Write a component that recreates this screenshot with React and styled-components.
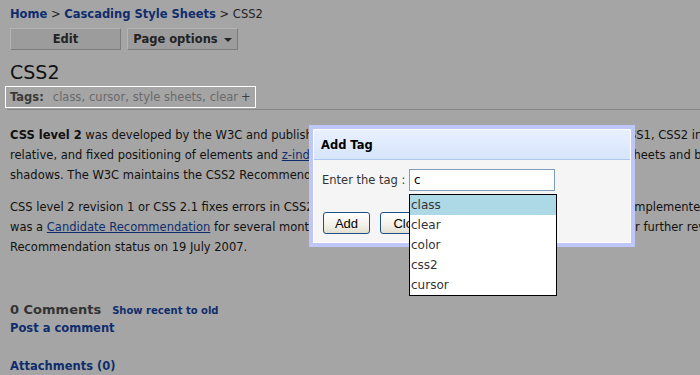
import styled, { createGlobalStyle } from "styled-components";

const GlobalStyle = createGlobalStyle`
  html, body {
    margin: 0;
    padding: 0;
    background: #a5a5a5;
    overflow: hidden;
  }
  body {
    width: 700px;
    height: 375px;
    font-family: "DejaVu Sans", Verdana, sans-serif;
  }
`;

const Page = styled.div`
  position: relative;
  width: 700px;
  height: 375px;
  padding: 6px 0 0 10px;
  box-sizing: border-box;
  color: #111;
  overflow: hidden;
`;

const Crumbs = styled.div`
  font-size: 11.5px;
  line-height: 16px;
  color: #222;
  white-space: nowrap;
`;

const NavLink = styled.a`
  color: #0f2d6c;
  font-weight: bold;
  text-decoration: none;
`;

const Toolbar = styled.div`
  display: flex;
  gap: 6px;
  margin-top: 6px;
`;

const ToolButton = styled.div`
  width: 111px;
  height: 22px;
  box-sizing: border-box;
  display: flex;
  align-items: center;
  justify-content: center;
  gap: 6px;
  background: #9c9c9c;
  border: 1px solid #7c7c7c;
  border-top-color: #b4b4b4;
  border-left-color: #b4b4b4;
  font-size: 11.5px;
  font-weight: bold;
  color: #222;
`;

const Caret = styled.span`
  width: 0;
  height: 0;
  border-left: 4px solid transparent;
  border-right: 4px solid transparent;
  border-top: 4px solid #222;
  margin-top: 2px;
`;

const Title = styled.h1`
  margin: 10px 0 0;
  font-size: 19px;
  line-height: 24px;
  font-weight: normal;
  color: #111;
`;

const TagBox = styled.div`
  display: inline-flex;
  align-items: center;
  height: 22px;
  box-sizing: border-box;
  margin: 2px 0 0 -5px;
  padding: 0 4px;
  border: 1px solid #fff;
  font-size: 11.5px;
  white-space: nowrap;
`;

const TagLabel = styled.span`
  font-weight: bold;
  color: #3a3a3a;
  margin-right: 9px;
`;

const Tag = styled.span`
  color: #6a6a6a;
`;

const Comma = styled.span`
  color: #4b6b80;
  margin-right: 4px;
`;

const Plus = styled.span`
  color: #3f3f3f;
  margin-left: 3px;
`;

const Rule = styled.div`
  height: 1px;
  background: #878787;
  margin: 1px 0 0 -3px;
`;

const Article = styled.div`
  margin-top: 15px;
  font-size: 11.5px;
  line-height: 20px;
  white-space: nowrap;
`;

const Para = styled.p`
  margin: 0 0 12px;
`;

const TextLink = styled.a`
  color: #0f2d6c;
  text-decoration: underline;
`;

const CommentsRow = styled.div`
  display: flex;
  align-items: baseline;
  gap: 11px;
  margin-top: 44px;
  line-height: 18px;
`;

const CommentsTitle = styled.span`
  font-size: 13px;
  font-weight: bold;
  color: #333;
`;

const SmallLink = styled(NavLink)`
  font-size: 10px;
`;

const BlockLink = styled(NavLink)`
  display: block;
  font-size: 11.5px;
  line-height: 16px;
  margin-top: ${(p) => p.$gap || 0}px;
`;

const Dialog = styled.div`
  position: absolute;
  left: 309px;
  top: 125px;
  width: 326px;
  box-sizing: border-box;
  border: 4px solid #bfc6f8;
  background: #f5f5f5;
`;

const DialogInner = styled.div`
  border: 1px solid #fff;
`;

const DialogHeader = styled.div`
  height: 29px;
  display: flex;
  align-items: center;
  padding-left: 7px;
  background: linear-gradient(#e7f0ff, #d7e5fb);
  border-bottom: 1px solid #b2c6f2;
  font-size: 11.5px;
  font-weight: bold;
  color: #000;
`;

const DialogBody = styled.div`
  padding: 9px 8px 8px 8px;
`;

const Field = styled.div`
  display: flex;
  align-items: center;
  font-size: 11.5px;
  color: #333;
  white-space: nowrap;
`;

const InputWrap = styled.div`
  position: relative;
  margin-left: auto;
  margin-right: 67px;
`;

const Input = styled.div`
  width: 146px;
  height: 22px;
  box-sizing: border-box;
  border: 1px solid #7f9db9;
  background: #fff;
  padding: 0 4px;
  font-size: 12px;
  line-height: 20px;
  color: #000;
`;

const Suggest = styled.ul`
  position: absolute;
  top: 25px;
  left: 0;
  width: 148px;
  margin: 0;
  padding: 0;
  list-style: none;
  border: 1px solid #000;
  background: #fff;
  box-sizing: border-box;
  z-index: 2;
`;

const SuggestItem = styled.li`
  height: 20px;
  line-height: 20px;
  padding-left: 1px;
  font-size: 12px;
  color: #333;
  background: ${(p) => (p.$active ? "#add8e6" : "#fff")};
`;

const Buttons = styled.div`
  display: flex;
  gap: 10px;
  margin-top: 21px;
  padding-left: 1px;
`;

const XpButton = styled.div`
  width: ${(p) => p.$w}px;
  height: 22px;
  box-sizing: border-box;
  display: flex;
  align-items: center;
  justify-content: center;
  border: 1px solid #1c4f82;
  border-radius: 3px;
  background: linear-gradient(#ffffff, #f3f1e8 60%, #e2dfd2);
  font-family: "Liberation Sans", Arial, sans-serif;
  font-size: 13px;
  color: #000;
`;

const suggestions = ["class", "clear", "color", "css2", "cursor"];
const tags = ["class", "cursor", "style sheets", "clear"];

export default function App() {
  return (
    <>
      <GlobalStyle />
      <Page>
        <Crumbs>
          <NavLink>Home</NavLink> &gt; <NavLink>Cascading Style Sheets</NavLink> &gt; CSS2
        </Crumbs>
        <Toolbar>
          <ToolButton>Edit</ToolButton>
          <ToolButton>
            Page options <Caret />
          </ToolButton>
        </Toolbar>
        <Title>CSS2</Title>
        <TagBox>
          <TagLabel>Tags:</TagLabel>
          {tags.map((t, i) => (
            <span key={t}>
              <Tag>{t}</Tag>
              {i < tags.length - 1 && <Comma>,</Comma>}
            </span>
          ))}
          <Plus>+</Plus>
        </TagBox>
        <Rule />
        <Article>
          <Para>
            <b>CSS level 2</b> was developed by the W3C and published as a Recommendation in May 1998. A superset of CSS1, CSS2 includes a number of new capabilities like absolute,
            <br />
            relative, and fixed positioning of elements and <TextLink>z-index</TextLink>, the concept of media types, support for aural style sheets and bidirectional text, and new font properties such as
            <br />
            shadows. The W3C maintains the CSS2 Recommendation.
          </Para>
          <Para>
            CSS level 2 revision 1 or CSS 2.1 fixes errors in CSS2, removes poorly-supported features and adds already-implemented browser extensions to the specification. While it
            <br />
            was a <TextLink>Candidate Recommendation</TextLink> for several months, on 15 June 2005 it was reverted to a working draft for further review. It was returned to Candidate
            <br />
            Recommendation status on 19 July 2007.
          </Para>
        </Article>
        <CommentsRow>
          <CommentsTitle>0 Comments</CommentsTitle>
          <SmallLink>Show recent to old</SmallLink>
        </CommentsRow>
        <BlockLink>Post a comment</BlockLink>
        <BlockLink $gap={22}>Attachments (0)</BlockLink>

        <Dialog>
          <DialogInner>
            <DialogHeader>Add Tag</DialogHeader>
            <DialogBody>
              <Field>
                Enter the tag :
                <InputWrap>
                  <Input>c</Input>
                  <Suggest>
                    {suggestions.map((s, i) => (
                      <SuggestItem key={s} $active={i === 0}>
                        {s}
                      </SuggestItem>
                    ))}
                  </Suggest>
                </InputWrap>
              </Field>
              <Buttons>
                <XpButton $w={47}>Add</XpButton>
                <XpButton $w={60}>Close</XpButton>
              </Buttons>
            </DialogBody>
          </DialogInner>
        </Dialog>
      </Page>
    </>
  );
}
